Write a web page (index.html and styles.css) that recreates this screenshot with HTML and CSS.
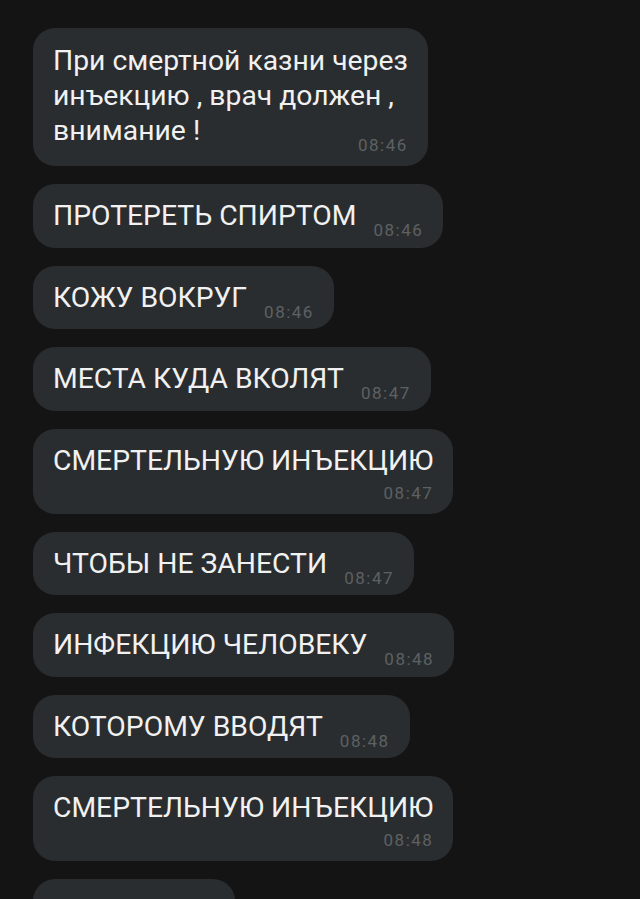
FILE: index.html
```html
<!DOCTYPE html>
<html lang="ru">
<head>
<meta charset="utf-8">
<title>Чат</title>
<link rel="stylesheet" href="styles.css">
</head>
<body>
<main class="chat">
  <div class="bubble multi">
    <div class="text">При смертной казни через<br>инъекцию , врач должен ,</div>
    <div class="row">
      <span class="text">внимание !</span>
      <span class="time">08:46</span>
    </div>
  </div>
  <div class="bubble"><span class="text">ПРОТЕРЕТЬ СПИРТОМ</span><span class="time">08:46</span></div>
  <div class="bubble"><span class="text">КОЖУ ВОКРУГ</span><span class="time">08:46</span></div>
  <div class="bubble"><span class="text">МЕСТА КУДА ВКОЛЯТ</span><span class="time">08:47</span></div>
  <div class="bubble stack"><span class="text">СМЕРТЕЛЬНУЮ ИНЪЕКЦИЮ</span><span class="time">08:47</span></div>
  <div class="bubble"><span class="text">ЧТОБЫ НЕ ЗАНЕСТИ</span><span class="time">08:47</span></div>
  <div class="bubble"><span class="text">ИНФЕКЦИЮ ЧЕЛОВЕКУ</span><span class="time">08:48</span></div>
  <div class="bubble"><span class="text">КОТОРОМУ ВВОДЯТ</span><span class="time">08:48</span></div>
  <div class="bubble stack"><span class="text">СМЕРТЕЛЬНУЮ ИНЪЕКЦИЮ</span><span class="time">08:48</span></div>
  <div class="bubble"><span class="text">ЗАЧЕМ</span><span class="time">08:48</span></div>
</main>
</body>
</html>
```

FILE: styles.css
```css
html, body {
  margin: 0;
  padding: 0;
  background: #141415;
  height: 899px;
  overflow: hidden;
}

.chat {
  display: flex;
  flex-direction: column;
  align-items: flex-start;
  gap: 18px;
  padding: 28px 0 0 33px;
  font-family: Roboto, "Noto Sans", sans-serif;
}

.bubble {
  display: flex;
  align-items: flex-end;
  gap: 17px;
  background: #2a2d2f;
  border-radius: 22px;
  padding: 15px 20px 14.5px 20px;
  box-sizing: border-box;
}

.text {
  color: #f1f1f1;
  font-size: 28.3px;
  line-height: 34px;
  white-space: nowrap;
}

.time {
  color: #5d6163;
  font-size: 17px;
  line-height: 18px;
  letter-spacing: 1.5px;
  margin-bottom: -6px;
}

.bubble.multi {
  flex-direction: column;
  align-items: stretch;
  gap: 0;
  padding-bottom: 18px;
}

.bubble.multi .text {
  line-height: 35px;
}

.row {
  display: flex;
  justify-content: space-between;
  align-items: flex-end;
}

.bubble.stack {
  flex-direction: column;
  gap: 0;
  padding-bottom: 12px;
}

.bubble.stack .time {
  align-self: flex-end;
  margin: 6px 0 0 0;
}
```
